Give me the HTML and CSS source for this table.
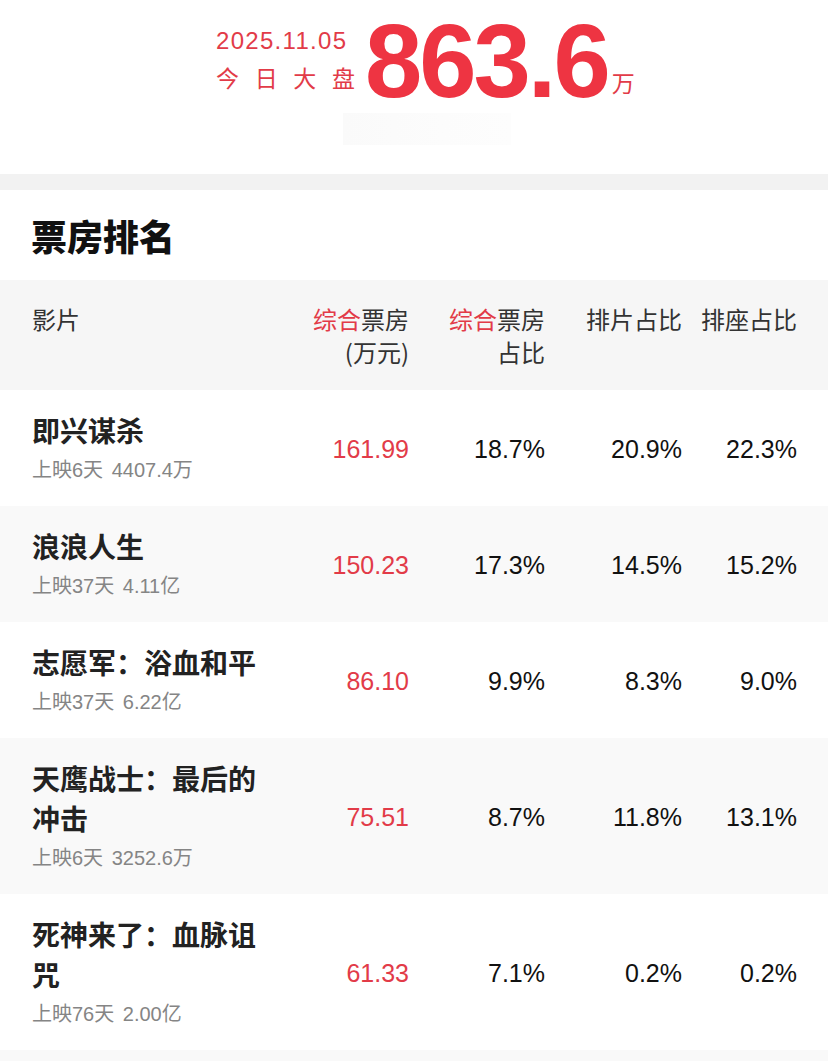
FILE: index.html
```html
<!DOCTYPE html>
<html lang="zh-CN">
<head>
<meta charset="utf-8">
<title>票房排名</title>
<link rel="stylesheet" href="styles.css">
</head>
<body>
<div class="page">
  <section class="hero">
    <div class="hero-row">
      <div class="hero-left">
        <div class="hero-date">2025.11.05</div>
        <div class="hero-label"><span>今</span><span>日</span><span>大</span><span>盘</span></div>
      </div>
      <div class="hero-num">863.6</div>
      <div class="hero-unit">万</div>
    </div>
    <div class="hero-smudge"></div>
  </section>
  <div class="divider"></div>
  <section class="board">
    <h2 class="board-title">票房排名</h2>
    <div class="grid head">
      <div class="c-film">影片</div>
      <div class="c-num"><span class="red">综合</span>票房<br>(万元)</div>
      <div class="c-num"><span class="red">综合</span>票房<br>占比</div>
      <div class="c-num">排片占比</div>
      <div class="c-num">排座占比</div>
    </div>
    <div class="grid row">
      <div class="c-film"><div class="film-name">即兴谋杀</div><div class="film-sub">上映6天 4407.4万</div></div>
      <div class="c-num val red">161.99</div>
      <div class="c-num val">18.7%</div>
      <div class="c-num val">20.9%</div>
      <div class="c-num val">22.3%</div>
    </div>
    <div class="grid row alt">
      <div class="c-film"><div class="film-name">浪浪人生</div><div class="film-sub">上映37天 4.11亿</div></div>
      <div class="c-num val red">150.23</div>
      <div class="c-num val">17.3%</div>
      <div class="c-num val">14.5%</div>
      <div class="c-num val">15.2%</div>
    </div>
    <div class="grid row">
      <div class="c-film"><div class="film-name">志愿军：浴血和平</div><div class="film-sub">上映37天 6.22亿</div></div>
      <div class="c-num val red">86.10</div>
      <div class="c-num val">9.9%</div>
      <div class="c-num val">8.3%</div>
      <div class="c-num val">9.0%</div>
    </div>
    <div class="grid row alt">
      <div class="c-film"><div class="film-name">天鹰战士：最后的冲击</div><div class="film-sub">上映6天 3252.6万</div></div>
      <div class="c-num val red">75.51</div>
      <div class="c-num val">8.7%</div>
      <div class="c-num val">11.8%</div>
      <div class="c-num val">13.1%</div>
    </div>
    <div class="grid row">
      <div class="c-film"><div class="film-name">死神来了：血脉诅咒</div><div class="film-sub">上映76天 2.00亿</div></div>
      <div class="c-num val red">61.33</div>
      <div class="c-num val">7.1%</div>
      <div class="c-num val">0.2%</div>
      <div class="c-num val">0.2%</div>
    </div>
    <div class="tail"></div>
  </section>
</div>
</body>
</html>
```

FILE: styles.css
```css
* { box-sizing: border-box; margin: 0; padding: 0; }
html, body { background: #fff; }
body {
  font-family: "Liberation Sans", "Noto Sans CJK SC", sans-serif;
  color: #111;
  width: 828px;
  overflow: hidden;
}
.page { width: 828px; }

.hero { height: 174px; background: #fff; padding-top: 10px; }
.hero-row {
  display: flex;
  align-items: flex-end;
  padding-left: 216px;
}
.hero-left { width: 139px; margin-bottom: 21px; color: #e23b48; }
.hero-date {
  font-size: 24px;
  line-height: 30px;
  letter-spacing: 1.3px;
  white-space: nowrap;
}
.hero-label {
  display: flex;
  justify-content: space-between;
  font-family: "Noto Sans CJK SC", sans-serif;
  font-size: 23px;
  line-height: 30px;
  margin-top: 6px;
}
.hero-num {
  font-family: "Liberation Sans", sans-serif;
  font-weight: 700;
  font-size: 103px;
  line-height: 103px;
  letter-spacing: -3px;
  color: #ee3442;
  margin-left: 10px;
}
.hero-unit {
  font-family: "Noto Sans CJK SC", sans-serif;
  font-size: 23px;
  line-height: 24px;
  color: #e23b48;
  margin-left: 4px;
  margin-bottom: 19px;
}
.hero-smudge {
  width: 168px;
  height: 32px;
  margin: 0 0 0 343px;
  background: linear-gradient(90deg, #fafafa 0%, #fcfcfc 60%, #fdfdfd 100%);
}

.divider { height: 16px; background: #f2f2f2; }

.board { background: #fff; }
.board-title {
  font-family: "Noto Sans CJK SC", sans-serif;
  font-weight: 900;
  font-size: 36px;
  line-height: 90px;
  height: 90px;
  padding-left: 31px;
  color: #111;
}

.grid {
  display: grid;
  grid-template-columns: 1fr 136px 136px 137px 115px;
  padding: 0 31px 0 32px;
}
.head {
  background: #f6f6f6;
  padding-top: 22px;
  padding-bottom: 22px;
  font-family: "Noto Sans CJK SC", sans-serif;
  font-size: 24px;
  line-height: 33px;
  color: #333;
}
.c-num { text-align: right; }
.red { color: #e23b48; }

.row {
  align-items: center;
  padding-top: 20px;
  padding-bottom: 22px;
  min-height: 116px;
}
.row.alt { background: #f9f9f9; }
.tail { height: 11px; background: #f9f9f9; }
.film-name {
  font-family: "Noto Sans CJK SC", sans-serif;
  font-weight: 700;
  font-size: 28px;
  line-height: 40px;
  color: #222;
  max-width: 240px;
}
.film-sub {
  margin-top: 6px;
  font-size: 20px;
  line-height: 28px;
  word-spacing: 3px;
  color: #858585;
}
.val {
  font-size: 25px;
  line-height: 30px;
  padding-top: 3px;
  color: #111;
}
.val.red { color: #e23b48; }
```
